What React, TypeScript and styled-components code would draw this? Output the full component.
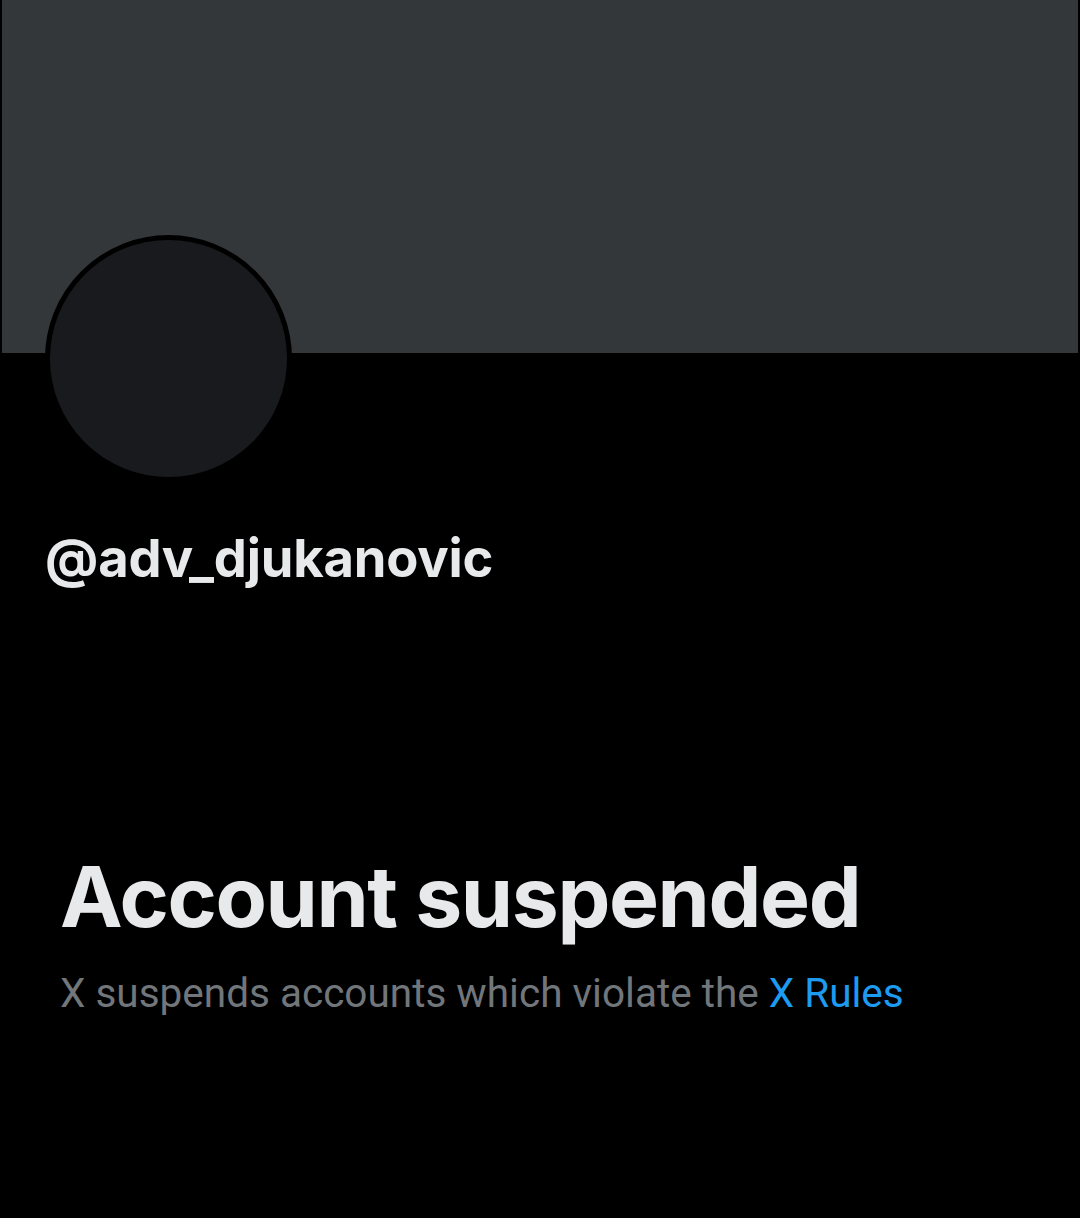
import React from 'react'
import styled, { createGlobalStyle } from 'styled-components'

const GlobalStyle = createGlobalStyle`
    html, body {
        margin: 0;
        padding: 0;
        background: #000;
    }
    body {
        font-family: Roboto, "Liberation Sans", sans-serif;
    }
`

const Page = styled.main`
    width: 1080px;
    height: 1218px;
    background: #000;
    overflow: hidden;
`

const Banner = styled.div`
    height: 353px;
    margin: 0 2px;
    background: #33373a;
`

const Header = styled.section`
    padding: 0 45px;
`

const Avatar = styled.div`
    width: 237px;
    height: 237px;
    margin-top: -118px;
    border: 5px solid #000;
    border-radius: 50%;
    background: #191a1d;
`

const Handle = styled.h1`
    margin: 45px 0 0;
    font-family: Inter, "Liberation Sans", sans-serif;
    font-size: 52.5px;
    font-weight: 700;
    line-height: 62px;
    letter-spacing: -0.2px;
    color: #e7e9ea;
`

const Notice = styled.section`
    padding: 0 60px;
    margin-top: 260px;
`

const Title = styled.h2`
    margin: 0;
    font-family: Inter, Roboto, sans-serif;
    font-size: 84px;
    font-weight: 700;
    line-height: 96px;
    letter-spacing: -1.4px;
    color: #e7e9ea;
`

const Text = styled.p`
    margin: 22px 0 0;
    font-family: Roboto, sans-serif;
    font-size: 40.5px;
    font-weight: 400;
    line-height: 52px;
    color: #71767b;
`

const RulesLink = styled.a`
    color: #1d9bf0;
    text-decoration: none;
`

export default function App() {
    return (
        <Page>
            <GlobalStyle />
            <Banner />
            <Header>
                <Avatar />
                <Handle>@adv_djukanovic</Handle>
            </Header>
            <Notice>
                <Title>Account suspended</Title>
                <Text>
                    X suspends accounts which violate the <RulesLink href="#">X Rules</RulesLink>
                </Text>
            </Notice>
        </Page>
    )
}
